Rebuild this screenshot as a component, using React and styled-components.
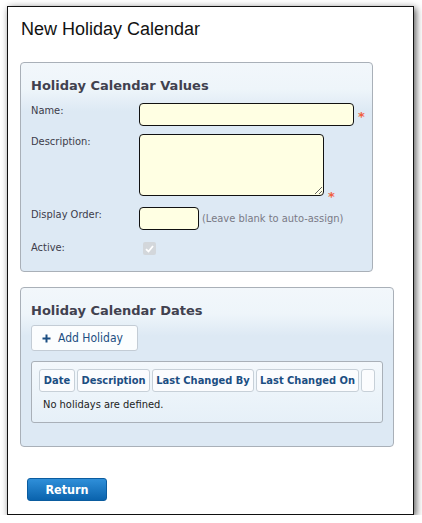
import styled, { createGlobalStyle } from "styled-components";

const GlobalStyle = createGlobalStyle`
  html, body {
    margin: 0;
    padding: 0;
    background: #ffffff;
  }
  * {
    box-sizing: border-box;
  }
`;

const ui = `"DejaVu Sans Condensed", "DejaVu Sans", Tahoma, sans-serif`;

function App() {
  return (
    <>
      <GlobalStyle />
      <Window>
        <Title>New Holiday Calendar</Title>

        <ValuesSet>
          <Legend>Holiday Calendar Values</Legend>
          <Row gap={8}>
            <Label>Name:</Label>
            <TextInput width={215} />
            <Required>*</Required>
          </Row>
          <Row gap={11}>
            <Label>Description:</Label>
            <TextArea />
            <Required low>*</Required>
          </Row>
          <Row gap={10}>
            <Label>Display Order:</Label>
            <TextInput width={60} />
            <Hint>(Leave blank to auto-assign)</Hint>
          </Row>
          <Row gap={0}>
            <Label>Active:</Label>
            <Check>
              <svg width="9" height="8" viewBox="0 0 9 8">
                <path d="M1 4.2 L3.5 6.5 L8 1" stroke="#fff" strokeWidth="1.8" fill="none" />
              </svg>
            </Check>
          </Row>
        </ValuesSet>

        <DatesSet>
          <Legend>Holiday Calendar Dates</Legend>
          <AddButton>
            <svg width="9" height="9" viewBox="0 0 9 9">
              <path d="M4.5 0.5 V8.5 M0.5 4.5 H8.5" stroke="#1b4e82" strokeWidth="2" />
            </svg>
            Add Holiday
          </AddButton>
          <Grid>
            <HeadRow>
              <HeadCell width={36}>Date</HeadCell>
              <HeadCell width={73}>Description</HeadCell>
              <HeadCell width={102}>Last Changed By</HeadCell>
              <HeadCell width={103}>Last Changed On</HeadCell>
              <HeadCell width={14} />
            </HeadRow>
            <Empty>No holidays are defined.</Empty>
          </Grid>
        </DatesSet>

        <ReturnButton>Return</ReturnButton>
      </Window>
    </>
  );
}

export default App;

const Window = styled.div`
  margin: 6px 0 0 7px;
  width: 407px;
  height: 509px;
  border: 1px solid #111;
  background: #fff;
  box-shadow: 2px 2px 7px rgba(0, 0, 0, 0.65);
  padding: 12px 12px 0 12px;
  display: flex;
  flex-direction: column;
  align-items: flex-start;
`;

const Title = styled.h1`
  margin: 0 0 22px 1px;
  font-family: "Liberation Sans", Arial, sans-serif;
  font-weight: normal;
  font-size: 18px;
  line-height: 21px;
  color: #111;
`;

const Fieldset = styled.div`
  border: 1px solid #a9b0b8;
  border-radius: 4px;
  background: linear-gradient(#f2f7fb 0px, #eef5fa 26px, #dde9f4 48px, #dde9f4 100%);
  padding: 15px 10px 0 10px;
  display: flex;
  flex-direction: column;
  align-items: flex-start;
`;

const ValuesSet = styled(Fieldset)`
  width: 353px;
  height: 210px;
`;

const DatesSet = styled(Fieldset)`
  width: 374px;
  height: 160px;
  margin-top: 15px;
`;

const Legend = styled.div`
  font-family: "DejaVu Sans", Tahoma, sans-serif;
  font-weight: bold;
  font-size: 13px;
  line-height: 16px;
  color: #41414f;
  margin-bottom: 9px;
`;

const Row = styled.div`
  display: flex;
  align-items: flex-start;
  margin-bottom: ${(p) => p.gap}px;
`;

const Label = styled.div`
  width: 108px;
  font-family: ${ui};
  font-size: 11px;
  line-height: 16px;
  color: #3c3c4a;
`;

const TextInput = styled.input`
  width: ${(p) => p.width}px;
  height: 23px;
  margin: 0;
  border: 1px solid #111;
  border-radius: 4px;
  background: #ffffe3;
  outline: none;
`;

const TextArea = styled.textarea`
  width: 185px;
  height: 62px;
  border: 1px solid #111;
  border-radius: 4px;
  background: #ffffe3;
  outline: none;
  margin: 0;
  display: block;
`;

const Required = styled.span`
  align-self: ${(p) => (p.low ? "flex-end" : "center")};
  margin-left: 4px;
  margin-bottom: ${(p) => (p.low ? "-6px" : "-5px")};
  font-family: "DejaVu Sans", sans-serif;
  font-weight: bold;
  font-size: 13px;
  line-height: 10px;
  color: #f0603f;
`;

const Hint = styled.span`
  align-self: center;
  margin-left: 3px;
  font-family: ${ui};
  font-size: 11px;
  color: #7a7a86;
`;

const Check = styled.span`
  margin: 2px 0 0 4px;
  width: 13px;
  height: 13px;
  border-radius: 2px;
  background: #d3d7db;
  display: flex;
  align-items: center;
  justify-content: center;
`;

const AddButton = styled.button`
  display: flex;
  align-items: center;
  gap: 7px;
  margin-top: -3px;
  width: 107px;
  height: 26px;
  padding: 0 0 0 10px;
  border: 1px solid #c3ccd5;
  border-radius: 3px;
  background: #fbfdfe;
  font-family: ${ui};
  font-size: 12px;
  color: #1b4e82;
`;

const Grid = styled.div`
  margin-top: 10px;
  width: 352px;
  height: 62px;
  border: 1px solid #a9b0b8;
  border-radius: 3px;
  background: linear-gradient(#f3f8fc, #e6f0f8);
  padding: 7px 7px 0 7px;
`;

const HeadRow = styled.div`
  display: flex;
  gap: 2px;
`;

const HeadCell = styled.div`
  flex: none;
  width: ${(p) => p.width}px;
  height: 23px;
  border: 1px solid #c7d0d8;
  border-radius: 3px;
  background: #fbfcfe;
  font-family: ${ui};
  font-weight: bold;
  font-size: 11px;
  line-height: 21px;
  text-align: center;
  color: #1b4e82;
  white-space: nowrap;
`;

const Empty = styled.div`
  margin: 6px 0 0 4px;
  font-family: ${ui};
  font-size: 11px;
  color: #222;
`;

const ReturnButton = styled.button`
  margin: 31px 0 0 7px;
  width: 80px;
  height: 23px;
  border: 1px solid #0b5c9f;
  border-radius: 3px;
  background: linear-gradient(#2f8fd9, #0a63ad);
  font-family: ${ui};
  font-weight: bold;
  font-size: 12.5px;
  color: #fff;
`;
